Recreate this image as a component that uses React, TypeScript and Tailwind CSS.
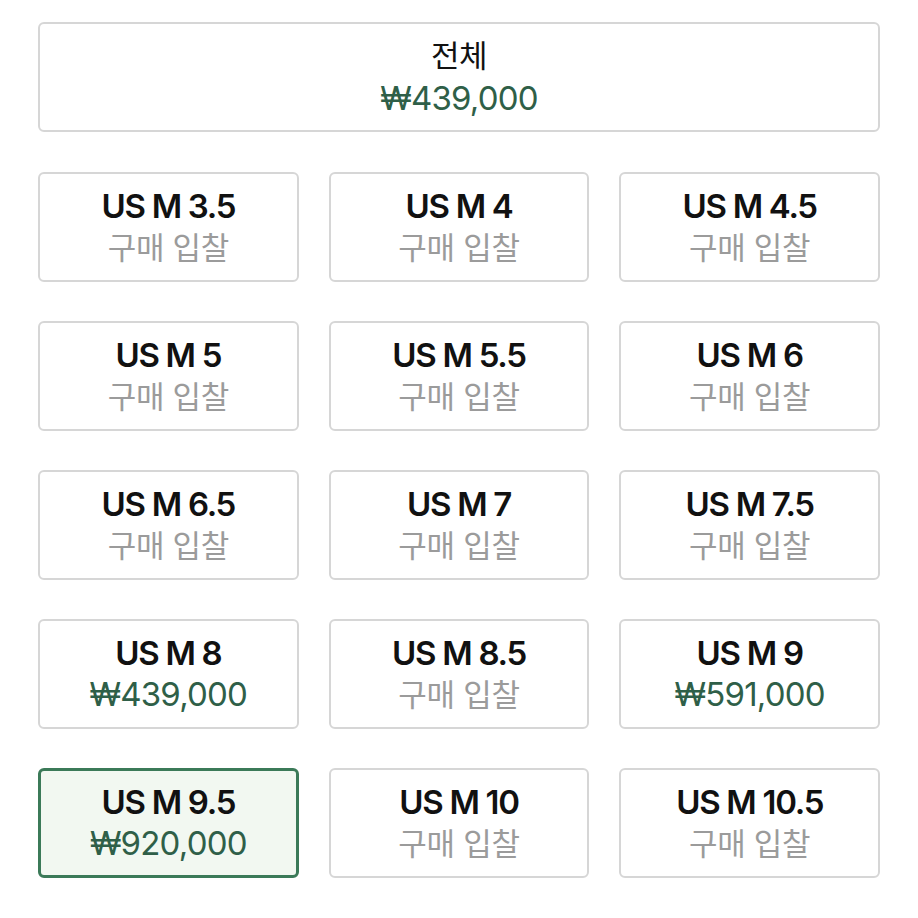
import React from "react";

type Item = { size: string; price?: string; selected?: boolean };

const items: Item[] = [
  { size: "US M 3.5" },
  { size: "US M 4" },
  { size: "US M 4.5" },
  { size: "US M 5" },
  { size: "US M 5.5" },
  { size: "US M 6" },
  { size: "US M 6.5" },
  { size: "US M 7" },
  { size: "US M 7.5" },
  { size: "US M 8", price: "₩439,000" },
  { size: "US M 8.5" },
  { size: "US M 9", price: "₩591,000" },
  { size: "US M 9.5", price: "₩920,000", selected: true },
  { size: "US M 10" },
  { size: "US M 10.5" },
];

const font = { fontFamily: '"Inter", "Noto Sans CJK KR", sans-serif' };

export default function App() {
  return (
    <div className="w-[918px] h-[918px] bg-white" style={font}>
      <div className="pt-[22px] px-[38px]">
        <div className="h-[110px] rounded-[6px] border-2 border-[#d6d6d6] flex flex-col items-center justify-center">
          <div className="text-[31px] leading-[42px] text-[#111] tracking-[-0.5px]">전체</div>
          <div className="text-[33px] leading-[42px] text-[#2f5f48] tracking-[-0.8px]">₩439,000</div>
        </div>
        <div className="mt-[40px] grid grid-cols-3 gap-x-[30px] gap-y-[39px]">
          {items.map((it) => (
            <div
              key={it.size}
              className={
                it.selected
                  ? "h-[110px] rounded-[6px] border-[3px] border-[#3b7a58] bg-[#f2f8f1] flex flex-col items-center justify-center"
                  : "h-[110px] rounded-[6px] border-2 border-[#d6d6d6] bg-white flex flex-col items-center justify-center"
              }
            >
              <div className="text-[33px] leading-[41px] font-semibold text-[#111] tracking-[-1.3px]">{it.size}</div>
              {it.price ? (
                <div className="text-[33px] leading-[41px] text-[#2f5f48] tracking-[-0.8px]">{it.price}</div>
              ) : (
                <div className="text-[31px] leading-[41px] text-[#9b9b9b] tracking-[-0.3px]">구매 입찰</div>
              )}
            </div>
          ))}
        </div>
      </div>
    </div>
  );
}
